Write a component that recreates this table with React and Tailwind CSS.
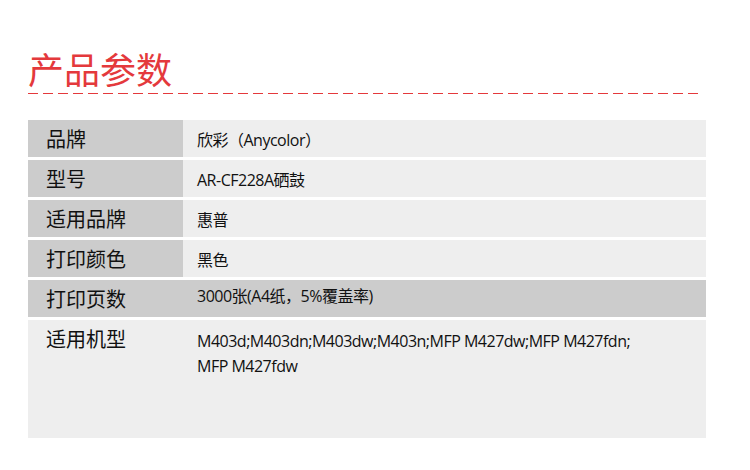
const rows = [
  { label: '品牌', value: '欣彩（Anycolor）' },
  { label: '型号', value: 'AR-CF228A硒鼓' },
  { label: '适用品牌', value: '惠普' },
  { label: '打印颜色', value: '黑色' },
]

export default function App() {
  return (
    <div className="w-[750px] h-[470px] bg-white font-['Open_Sans','Noto_Sans_CJK_SC',sans-serif] text-[#111]">
      <div className="pl-[28px] pt-[48px]">
        <h1 className="text-[36px] leading-[40px] text-[#e4393c] font-['Noto_Sans_CJK_SC',sans-serif] font-normal">产品参数</h1>
        <div className="mt-[5px] h-px w-[672px] bg-[linear-gradient(to_right,#e4393c_10px,transparent_10px)] bg-[length:15px_1px] bg-repeat-x" />
      </div>

      <div className="ml-[28px] mt-[26px] w-[678px] flex flex-col gap-[3px]">
        {rows.map((r) => (
          <div key={r.label} className="flex h-[37px]">
            <div className="w-[155px] bg-[#cccccc] pl-[18px] pt-[8px] text-[20px] leading-[24px]">{r.label}</div>
            <div className="flex-1 bg-[#eeeeee] pl-[14px] pt-[9px] text-[16px] leading-[22px] tracking-[-0.5px]">{r.value}</div>
          </div>
        ))}
        <div className="flex h-[37px] bg-[#cccccc]">
          <div className="w-[155px] pl-[18px] pt-[8px] text-[20px] leading-[24px]">打印页数</div>
          <div className="flex-1 pl-[14px] pt-[5px] text-[16px] leading-[22px] tracking-[-0.5px]">3000张(A4纸，5%覆盖率)</div>
        </div>
        <div className="flex h-[118px] bg-[#eeeeee]">
          <div className="w-[155px] pl-[18px] pt-[8px] text-[20px] leading-[24px]">适用机型</div>
          <div className="flex-1 pl-[14px] pt-[9px] pr-[20px] text-[16px] leading-[25px] tracking-[-0.5px]">
            M403d;M403dn;M403dw;M403n;MFP M427dw;MFP M427fdn;
            <br />
            MFP M427fdw
          </div>
        </div>
      </div>
    </div>
  )
}
